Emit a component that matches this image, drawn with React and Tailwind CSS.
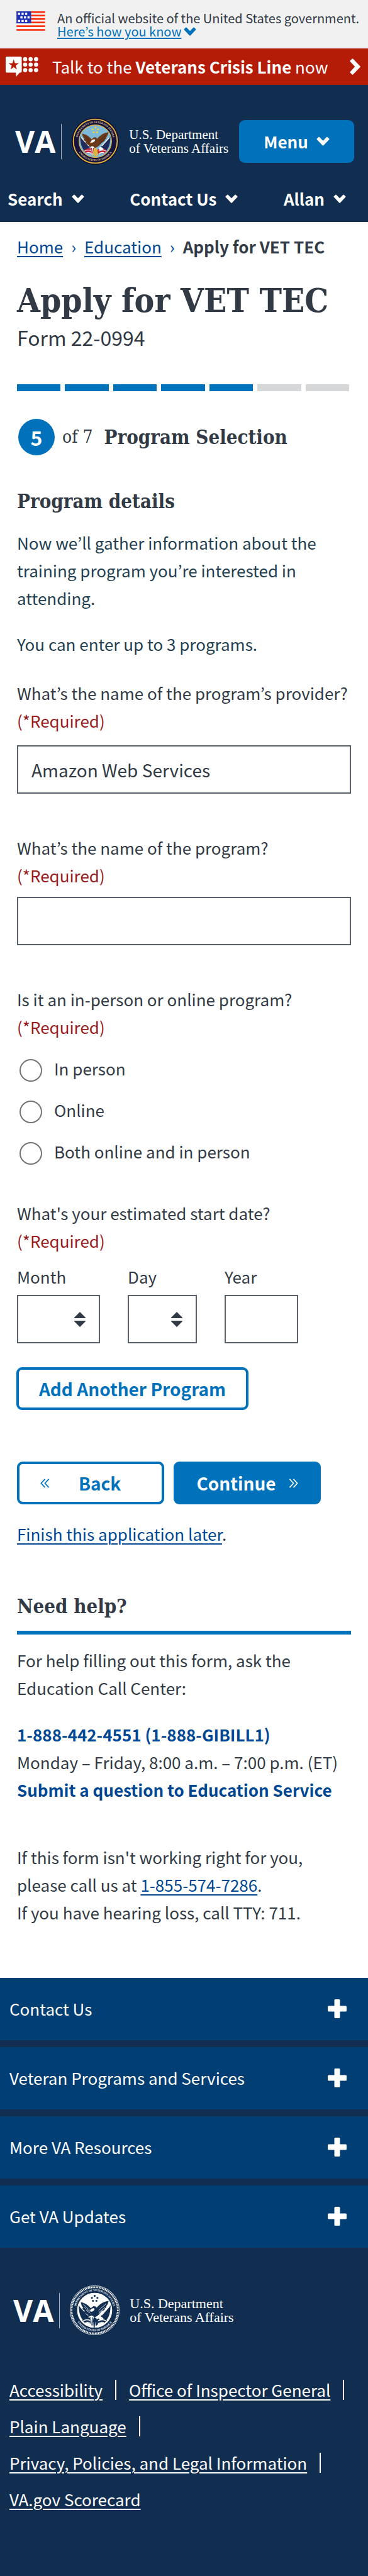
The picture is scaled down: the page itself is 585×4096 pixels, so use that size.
const bitter = "font-['DejaVu_Serif_Condensed','DejaVu_Serif',serif]";
const link = "text-[#004793] underline decoration-2 underline-offset-4";

function Chevron({ className }) {
  return (
    <svg viewBox="0 0 20 14" className={className} fill="currentColor" aria-hidden="true">
      <path d="M0.8 3.2 3.2 0.800a1 1 0 0 1 1.400 0L10 6.300 15.400 0.800a1 1 0 0 1 1.400 0l2.400 2.400a1 1 0 0 1 0 1.400l-8.500 8.800a1 1 0 0 1-1.400 0L0.800 4.600a1 1 0 0 1 0-1.400Z" />
    </svg>
  );
}

function Guillemet({ className }) {
  return (
    <svg viewBox="0 0 16 16" className={className} fill="none" stroke="currentColor" strokeWidth="1.800" aria-hidden="true">
      <path d="M8 1 1.500 8 8 15M14.500 1 8 8l6.500 7" />
    </svg>
  );
}

function Flag() {
  return (
    <svg viewBox="0 0 50 34" className="h-[31px] w-[46px] shrink-0" aria-hidden="true">
      <rect width="50" height="34" fill="#f6f2f2" />
      {[0, 6, 12, 18, 24.5, 31].map((y) => (
        <rect key={y} y={y} width="50" height="2.800" fill="#fa2b08" />
      ))}
      <rect width="25.500" height="21" fill="#2333b5" />
      {[
        [2.5, 2.5], [8.8, 2.5], [15, 2.5],
        [6.8, 8.7], [13, 8.7], [19.2, 8.7],
        [2.5, 15], [8.8, 15], [15, 15],
      ].map(([x, y]) => (
        <rect key={x + "-" + y} x={x} y={y} width="3.700" height="3.700" fill="#fff" />
      ))}
    </svg>
  );
}

function CrisisIcon() {
  return (
    <svg viewBox="0 0 57 35" className="h-8 w-[52px] shrink-0" fill="#fff" aria-hidden="true">
      <path d="M2 0h24a2 2 0 0 1 2 2v24a2 2 0 0 1-2 2h-1.500L18 35v-7H2a2 2 0 0 1-2-2V2a2 2 0 0 1 2-2Z" />
      <path fill="#b51c08" d="m14 5 2.1 6.6h7L17.5 15.700l2.1 6.700L14 18.300l-5.600 4.100 2.100-6.700-5.600-4.100h7Z" />
      {[34, 43.5, 53].map((x) =>
        [4.5, 14, 23.5].map((y) => <circle key={x + "-" + y} cx={x} cy={y} r="3.600" />)
      )}
    </svg>
  );
}

function Seal({ mono, className }) {
  const ring = mono ? "#112e51" : "#16133f";
  const trim = mono ? "#fff" : "#e9b93a";
  const field = mono ? "#fff" : "#7db9d8";
  const bird = mono ? "#112e51" : "#6b3a1c";
  const flag = mono ? "#112e51" : "#1f2c5c";
  const stripe = mono ? "#112e51" : "#c32033";
  const id = mono ? "seal-mono" : "seal-color";
  return (
    <svg viewBox="0 0 100 100" className={className} role="img" aria-label="Seal">
      <defs>
        <path id={id + "-top"} d="M12.300 54a38 38 0 1 1 75.400 0" />
        <path id={id + "-bot"} d="M8 50a42 42 0 0 0 84 0" />
      </defs>
      <circle cx="50" cy="50" r="49.500" fill={ring} stroke={mono ? "#fff" : "#0c0b2a"} strokeWidth="1" />
      <circle cx="50" cy="50" r="46.500" fill="none" stroke={trim} strokeWidth={mono ? 3.5 : 2.4} strokeDasharray={mono ? "2 1.2" : "none"} />
      <circle cx="50" cy="50" r="34.500" fill={field} stroke={trim} strokeWidth="1.400" />
      <g fontFamily="Liberation Serif, serif" fontWeight="bold" fontSize="5.600" fill={mono ? "#fff" : "#e8d48a"} textAnchor="middle">
        <text><textPath href={"#" + id + "-top"} startOffset="50%">DEPARTMENT OF VETERANS AFFAIRS</textPath></text>
        <text><textPath href={"#" + id + "-bot"} startOffset="50%">UNITED STATES OF AMERICA</textPath></text>
      </g>
      <g fill={mono ? "#112e51" : "#f3d13c"}>
        <circle cx="50" cy="21" r="2" />
        <circle cx="44.500" cy="25" r="2" />
        <circle cx="55.500" cy="25" r="2" />
        <circle cx="46.500" cy="31" r="2" />
        <circle cx="53.500" cy="31" r="2" />
      </g>
      <path fill={flag} d="M18 40 38 62 34 76C24 71 18 60 18 40ZM82 40 62 62l4 14c10-5 16-16 16-36Z" />
      <path fill={stripe} d="M25 70c7-5 11-6 16-5l5 4-2 9c-5-3-9-4-13-2ZM75 70c-7-5-11-6-16-5l-5 4 2 9c5-3 9-4 13-2Z" />
      <path stroke="#fff" strokeWidth="1.600" fill="none" d="M27 71c6-3 10-3 16 0M31 75c4-2 8-1 12 2M73 71c-6-3-10-3-16 0M69 75c-4-2-8-1-12 2M20 42l16 18M80 42 64 60" />
      <path fill={bird} d="M22 34c5 0 15 5 20 12l5-4c3-1 6 0 7 3 6-8 15-13 24-14-1 6-3 9-5 11l1 1-4 4 0 2-6 4c-4 4-7 9-14 11-6 1-12-1-15-6l-6-4 1-3-5-4 2-2c-3-3-4-6-5-11Z" />
      <path stroke={mono ? "#fff" : "#3e1f10"} strokeWidth="1" fill="none" d="M27 38l13 12M29 44l11 9M33 50l8 6M73 37 58 50M71 44l-12 10M67 50l-9 7" />
      <path fill="#fff" d="M41 50c2-4 7-5 9-3-1 3-3 6-8 6l-3 1Z" />
      <path fill={mono ? "#112e51" : "#e7b52d"} d="m38 53 4-1-1 3ZM46 67l4-3 4 3 2 12-4 3-1-10-1 13h-2l-1-12-2 9-2-3Z" />
      <path fill="#fff" d="M40 62c2-2 6-2 8 1l-2 12-3 4-2-7ZM60 62c2 0 6 2 8 5l-6 3-5-3Z" />
      <path stroke={stripe} strokeWidth="1.500" d="m42 64 1 13M46 64l-1 11" />
    </svg>
  );
}

function Logo({ footer }) {
  return (
    <a href="#home" className="flex items-center text-white">
      <span className="font-['Open_Sans',sans-serif] text-[48px] leading-none font-bold">VA</span>
      <span className="ml-[9px] h-[56px] w-px bg-[#a9b5c3]" />
      <Seal mono={footer} className={footer ? "ml-4 size-[79px]" : "ml-4 size-[75px]"} />
      <span className={footer ? "ml-4 font-['Liberation_Serif',serif] text-[22px] leading-[22px] whitespace-nowrap" : "ml-4 font-['Liberation_Serif',serif] text-[21px] leading-[22px] whitespace-nowrap"}>
        U.S. Department<br />of Veterans Affairs
      </span>
    </a>
  );
}

function Required() {
  return <span className="block text-[#981b1e]">(*Required)</span>;
}

function DateSelect({ id, label, className }) {
  return (
    <div className={className}>
      <label htmlFor={id} className="block">{label}</label>
      <div className="relative mt-[7px]">
        <select id={id} className="block h-[77px] w-full appearance-none border-2 border-[#5b616b] bg-white px-3">
          <option />
        </select>
        <svg viewBox="0 0 18 24" className="pointer-events-none absolute top-[27px] right-[23px] h-6 w-[18px]" fill="#323a45" aria-hidden="true">
          <path d="M9 0 18 9v1H0V9ZM0 14h18v1l-9 9-9-9Z" />
        </svg>
      </div>
    </div>
  );
}

const navItems = ["Search", "Contact Us", "Allan"];
const modes = ["In person", "Online", "Both online and in person"];
const sections = ["Contact Us", "Veteran Programs and Services", "More VA Resources", "Get VA Updates"];
const links = ["Accessibility", "Office of Inspector General", "Plain Language", "Privacy, Policies, and Legal Information", "VA.gov Scorecard"];

export default function App() {
  return (
    <div className="bg-white font-['Noto_Sans_CJK_KR',sans-serif] text-[26px] leading-[44px] text-[#323a45]">
      <div className="flex h-[77px] items-start gap-[19px] bg-[#f1f1f1] pt-[18px] pl-[26px] text-[20px] leading-[21px]">
        <Flag />
        <div className="whitespace-nowrap">
          <p>An official website of the United States government.</p>
          <button type="button" className="flex items-center gap-1 text-[#0071bb]">
            <span className="underline decoration-2 underline-offset-2">Here’s how you know</span>
            <Chevron className="h-[14px] w-5" />
          </button>
        </div>
      </div>

      <a href="#crisis" className="flex h-[58px] items-center bg-[#b51c08] pr-3 pl-[9px] text-white">
        <CrisisIcon />
        <span className="ml-[22px] whitespace-nowrap">Talk to the <b>Veterans Crisis Line</b> now</span>
        <svg viewBox="0 0 17 26" className="ml-auto h-[26px] w-[17px]" fill="#fff" aria-hidden="true">
          <path d="M5.200 0.500 16.500 12.300a1 1 0 0 1 0 1.400L5.200 25.500a1 1 0 0 1-1.400 0L0.600 22.600a1 1 0 0 1 0-1.400L8.200 13 0.600 4.800a1 1 0 0 1 0-1.400L3.800 0.500a1 1 0 0 1 1.400 0Z" />
        </svg>
      </a>

      <header className="bg-[#112e51] pt-[52px] pb-[15px] font-bold text-white">
        <div className="flex items-center justify-between pr-[22px] pl-6">
          <div className="font-normal"><Logo /></div>
          <button type="button" className="flex h-[68px] w-[183px] items-center justify-center gap-[13px] rounded-[9px] bg-[#0071bb]">
            Menu <Chevron className="h-[15px] w-[21px]" />
          </button>
        </div>
        <nav className="mt-8 flex justify-between pr-[35px] pl-3">
          {navItems.map((n) => (
            <button key={n} type="button" className="flex items-center gap-[14px]">
              {n} <Chevron className="h-[14px] w-5" />
            </button>
          ))}
        </nav>
      </header>

      <main className="px-[27px]">
        <nav className="flex gap-[13px] pt-[17px] whitespace-nowrap text-[#004793]">
          <a href="#home" className={link}>Home</a>
          <span>›</span>
          <a href="#education" className={link}>Education</a>
          <span>›</span>
          <b className="text-[#323a45]">Apply for VET TEC</b>
        </nav>
        <h1 className={bitter + " mt-[33px] text-[53px] leading-[60px] font-bold whitespace-nowrap"}>Apply for VET TEC</h1>
        <p className="mt-[7px] text-[32px]">Form 22-0994</p>

        <div className="mt-[53px] -mr-1 grid h-[11px] grid-cols-7" role="progressbar" aria-label="Progress" aria-valuenow={5} aria-valuemax={7}>
          {[1, 2, 3, 4, 5, 6, 7].map((n) => (
            <div key={n} className={n <= 5 ? "mr-[7px] bg-[#0071bb]" : "mr-[7px] bg-[#d6d7d9]"} />
          ))}
        </div>

        <h2 className={bitter + " mt-11 flex items-center font-bold whitespace-nowrap"}>
          <span className="ml-[2px] flex size-[58px] items-center justify-center rounded-full bg-[#0071bb] font-['Noto_Sans_CJK_KR',sans-serif] text-[32px] text-white">5</span>
          <span className="ml-3 text-[28px] font-normal">of 7</span>
          <span className="ml-[18px] text-[31px]">Program Selection</span>
        </h2>

        <h3 className={bitter + " mt-[51px] text-[31px] font-bold"}>Program details</h3>
        <p className="mt-[22px] text-[#243f50]">Now we’ll gather information about the training program you’re interested in attending.</p>
        <p className="mt-[29px] text-[#243f50]">You can enter up to 3 programs.</p>

        <div className="mt-[34px]">
          <label htmlFor="provider" className="block whitespace-nowrap">What’s the name of the program’s provider?<Required /></label>
          <input id="provider" type="text" defaultValue="Amazon Web Services" className="mt-[17px] block h-[77px] w-full border-2 border-[#5b616b] px-[21px] text-[28px]" />
        </div>
        <div className="mt-16">
          <label htmlFor="program" className="block">What’s the name of the program?<Required /></label>
          <input id="program" type="text" className="mt-3 block h-[77px] w-full border-2 border-[#5b616b] px-[21px] text-[28px]" />
        </div>

        <fieldset className="mt-16">
          <legend>Is it an in-person or online program?<Required /></legend>
          <div className="mt-[22px] flex flex-col gap-[22px]">
            {modes.map((m) => (
              <label key={m} className="flex items-start gap-[19px] pl-1">
                <input type="radio" name="mode" className="mt-[7px] size-9 appearance-none rounded-full border-2 border-[#757575]" />
                {m}
              </label>
            ))}
          </div>
        </fieldset>

        <fieldset className="mt-[54px]">
          <legend>What's your estimated start date?<Required /></legend>
          <div className="mt-[13px] flex gap-11">
            <DateSelect id="month" label="Month" className="w-[132px]" />
            <DateSelect id="day" label="Day" className="w-[110px]" />
            <div className="w-[117px]">
              <label htmlFor="year" className="block">Year</label>
              <input id="year" type="text" className="mt-[7px] block h-[77px] w-full border-2 border-[#5b616b] px-3" />
            </div>
          </div>
        </fieldset>

        <button type="button" className="mt-[38px] -ml-px block h-[68px] w-[369px] rounded-[9px] border-4 border-[#0071bb] text-[28px] font-bold text-[#0071bb]">Add Another Program</button>

        <div className="mt-[82px] flex gap-[15px] text-[28px] font-bold">
          <button type="button" className="flex h-[68px] w-[234px] items-center rounded-[9px] border-4 border-[#0071bb] pl-[33px] text-[#0071bb]">
            <Guillemet className="size-[15px]" /><span className="ml-[46px]">Back</span>
          </button>
          <button type="button" className="flex h-[68px] w-[234px] items-center justify-center gap-5 rounded-[9px] bg-[#0071bb] text-white">
            Continue <Guillemet className="size-[15px] rotate-180" />
          </button>
        </div>
        <p className="mt-[25px]"><a href="#later" className={link}>Finish this application later</a>.</p>

        <h2 className={bitter + " mt-[71px] border-b-[6px] border-[#0071bb] pb-[17px] text-[31px] font-bold"}>Need help?</h2>
        <p className="mt-[19px]">For help filling out this form, ask the Education Call Center:</p>
        <p className="mt-[30px] whitespace-nowrap">
          <a href="#phone" className="font-bold text-[#004793]">1-888-442-4551 (1-888-GIBILL1)</a><br />
          Monday – Friday, 8:00 a.m. – 7:00 p.m. (ET)<br />
          <a href="#ask" className="font-bold text-[#004793]">Submit a question to Education Service</a>
        </p>
        <p className="mt-[63px] pb-[82px]">
          If this form isn't working right for you,<br />
          please call us at <a href="#help" className={link}>1-855-574-7286</a>.<br />
          If you have hearing loss, call TTY: 711.
        </p>
      </main>

      <footer className="bg-[#112e51] text-white">
        <div className="flex flex-col gap-[11px]">
          {sections.map((s) => (
            <button key={s} type="button" className="flex h-[99px] items-center justify-between bg-[#003e73] pr-[34px] pb-[2px] pl-[15px]">
              {s}
              <svg viewBox="0 0 30 30" className="size-[30px]" fill="#fff" aria-hidden="true">
                <rect x="10.500" width="9" height="30" rx="1.500" />
                <rect y="10.500" width="30" height="9" rx="1.500" />
              </svg>
            </button>
          ))}
        </div>
        <div className="pt-[60px] pl-[21px]"><Logo footer /></div>
        <ul className="mt-[58px] flex flex-wrap pr-4 pb-[93px] pl-[15px] leading-[58px]">
          {links.map((l, i) => (
            <li key={l} className="flex items-center whitespace-nowrap">
              <a href="#link" className="underline decoration-2 underline-offset-4">{l}</a>
              {i < links.length - 1 && <span className="mx-5 h-8 w-[2px] bg-white" />}
            </li>
          ))}
        </ul>
      </footer>
    </div>
  );
}
